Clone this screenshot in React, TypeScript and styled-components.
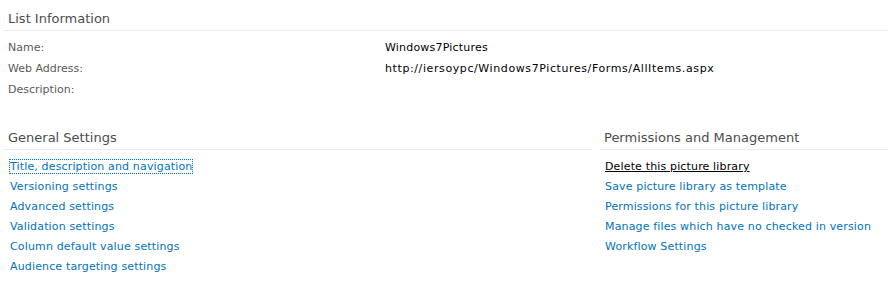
import React from 'react';
import styled, { createGlobalStyle } from 'styled-components';

const GlobalStyle = createGlobalStyle`
  body {
    margin: 0;
    background: #ffffff;
    font-family: "DejaVu Sans", Verdana, sans-serif;
  }
`;

const Page = styled.div`
  display: flex;
  flex-direction: column;
  width: 888px;
  padding: 9px 0 0 4px;
  box-sizing: border-box;
`;

const SectionHeader = styled.div`
  padding: 0 0 2px 4px;
  border-bottom: 1px solid #ebebeb;
  font-size: 13px;
  line-height: 19px;
  color: #4c4c4c;
  white-space: nowrap;
`;

const InfoGrid = styled.div`
  display: grid;
  grid-template-columns: 377px 1fr;
  padding: 6px 0 0 4px;
`;

const InfoLabel = styled.div`
  font-size: 11px;
  line-height: 21px;
  color: #5a5a5a;
`;

const InfoValue = styled.div<{ $spacing?: number }>`
  font-size: 11px;
  line-height: 21px;
  letter-spacing: ${(p) => p.$spacing ?? 0.2}px;
  color: #000000;
`;

const Columns = styled.div`
  display: grid;
  grid-template-columns: 588px 1fr;
  column-gap: 8px;
  margin-top: 28px;
`;

const Column = styled.div`
  display: flex;
  flex-direction: column;
`;

const LinkList = styled.ul<{ $indent: number }>`
  list-style: none;
  margin: 0;
  padding: 7px 0 0 ${(p) => p.$indent}px;
`;

const LinkItem = styled.li`
  font-size: 11px;
  line-height: 20px;
  letter-spacing: 0.15px;
  white-space: nowrap;
`;

const SettingsLink = styled.a<{ $active?: boolean; $focused?: boolean }>`
  color: ${(p) => (p.$active ? '#000000' : '#0072bc')};
  text-decoration: ${(p) => (p.$active ? 'underline' : 'none')};
  outline: ${(p) => (p.$focused ? '1px dotted #0072bc' : 'none')};
  cursor: pointer;
`;

const general = [
  'Title, description and navigation',
  'Versioning settings',
  'Advanced settings',
  'Validation settings',
  'Column default value settings',
  'Audience targeting settings',
];

const permissions = [
  'Delete this picture library',
  'Save picture library as template',
  'Permissions for this picture library',
  'Manage files which have no checked in version',
  'Workflow Settings',
];

const App: React.FC = () => {
  return (
    <>
      <GlobalStyle />
      <Page>
        <SectionHeader>List Information</SectionHeader>
        <InfoGrid>
          <InfoLabel>Name:</InfoLabel>
          <InfoValue>Windows7Pictures</InfoValue>
          <InfoLabel>Web Address:</InfoLabel>
          <InfoValue $spacing={0.6}>http://iersoypc/Windows7Pictures/Forms/AllItems.aspx</InfoValue>
          <InfoLabel>Description:</InfoLabel>
          <InfoValue></InfoValue>
        </InfoGrid>
        <Columns>
          <Column>
            <SectionHeader>General Settings</SectionHeader>
            <LinkList $indent={6}>
              {general.map((label, i) => (
                <LinkItem key={label}>
                  <SettingsLink $focused={i === 0}>{label}</SettingsLink>
                </LinkItem>
              ))}
            </LinkList>
          </Column>
          <Column>
            <SectionHeader>Permissions and Management</SectionHeader>
            <LinkList $indent={5}>
              {permissions.map((label, i) => (
                <LinkItem key={label}>
                  <SettingsLink $active={i === 0}>{label}</SettingsLink>
                </LinkItem>
              ))}
            </LinkList>
          </Column>
        </Columns>
      </Page>
    </>
  );
};

export default App;
